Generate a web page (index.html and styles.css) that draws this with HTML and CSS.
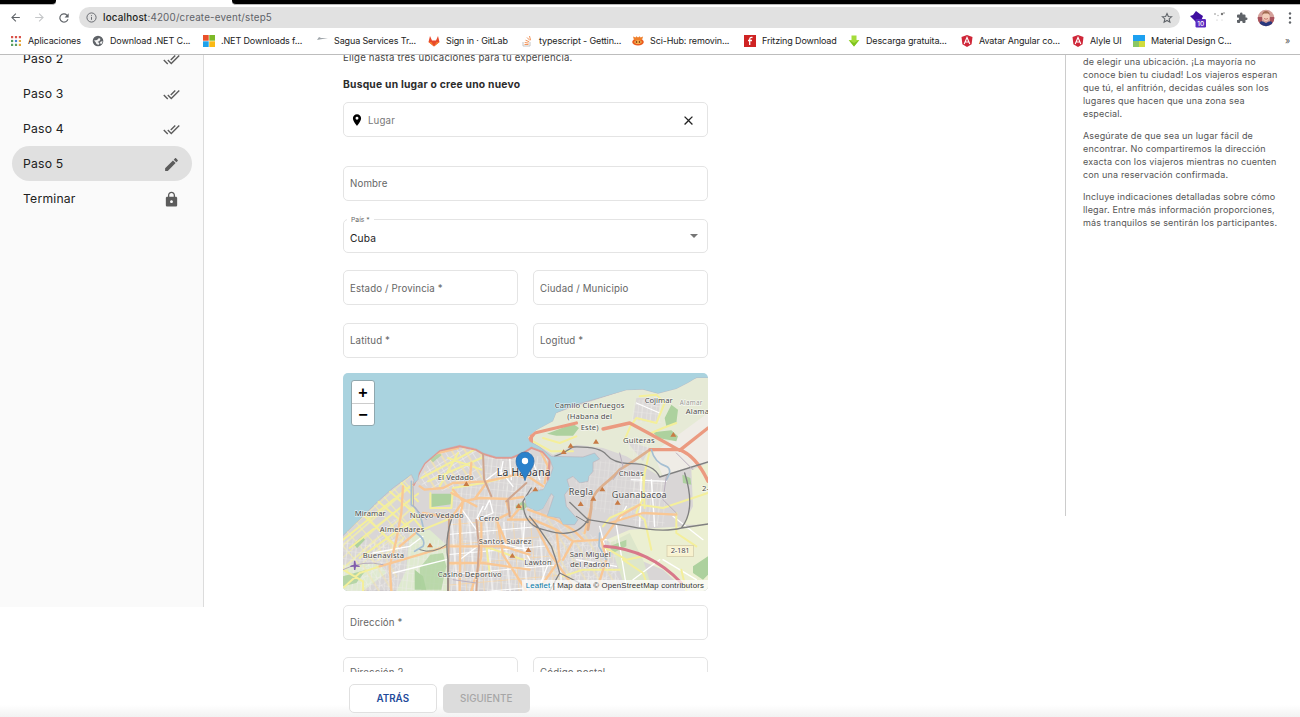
FILE: index.html
```html
<!DOCTYPE html>
<html lang="es">
<head>
<meta charset="utf-8">
<title>Crear evento</title>
<link rel="stylesheet" href="styles.css">
</head>
<body>
<header class="chrome">
  <div class="tabstrip"><div class="dark left"></div><div class="dark right"></div></div>
  <div class="toolbar">
    <svg class="nav-ic" viewBox="0 0 24 24"><path d="M20 11H7.800l5.600-5.600L12 4l-8 8 8 8 1.400-1.400L7.800 13H20z" fill="#5f6368"/></svg>
    <svg class="nav-ic" viewBox="0 0 24 24"><path d="M4 11h12.200l-5.600-5.600L12 4l8 8-8 8-1.400-1.400 5.600-5.600H4z" fill="#c4c6c8"/></svg>
    <svg class="nav-ic" viewBox="0 0 24 24"><path d="M17.650 6.350A8 8 0 1 0 19.730 14h-2.080A6 6 0 1 1 12 6c1.660 0 3.140.690 4.220 1.780L13 11h7V4z" fill="#5f6368"/></svg>
    <div class="omnibox">
      <svg class="info" viewBox="0 0 24 24" fill="none" stroke="#5f6368" stroke-width="2"><circle cx="12" cy="12" r="10"/><path d="M12 11v6M12 7v2"/></svg>
      <span class="url"><b>localhost</b>:4200/create-event/step5</span>
      <svg class="star" viewBox="0 0 24 24" fill="none" stroke="#5f6368" stroke-width="2.200"><path d="M12 3l2.700 6 6.500.600-4.900 4.300 1.500 6.400L12 17l-5.800 3.300 1.500-6.400-4.900-4.300 6.500-.600z"/></svg>
    </div>
    <div class="ext">
      <svg class="ext-a" viewBox="0 0 18 18"><path d="M1 6l3-1 3-4 4 3 3 2-2 5-5 1-3-3z" fill="#3f0fa0"/><rect x="6.500" y="9" width="10.500" height="8.500" rx="1.200" fill="#5b2bc0"/><text x="11.700" y="15.900" text-anchor="middle" class="badge">10</text></svg>
      <svg class="ext-b" viewBox="0 0 14 14" fill="#b9b9b9"><circle cx="2" cy="3" r="1"/><circle cx="5" cy="4.500" r=".8"/><circle cx="9" cy="3" r="1.200" fill="#777"/><circle cx="11" cy="2" r="1"/><circle cx="4" cy="9" r=".6"/><circle cx="9" cy="9" r=".5"/></svg>
      <svg class="ext-c" viewBox="0 0 24 24"><path d="M20.500 11H19V7a2 2 0 0 0-2-2h-4V3.500a2.500 2.500 0 0 0-5 0V5H4a2 2 0 0 0-2 2v3.800h1.500a2.700 2.700 0 0 1 0 5.400H2V20a2 2 0 0 0 2 2h3.800v-1.500a2.700 2.700 0 0 1 5.400 0V22H17a2 2 0 0 0 2-2v-4h1.500a2.500 2.500 0 0 0 0-5z" fill="#5f6368"/></svg>
      <svg class="avatar" viewBox="0 0 18 18"><defs><clipPath id="av"><circle cx="9" cy="9" r="8.300"/></clipPath></defs><g clip-path="url(#av)"><path d="M0 0h18v18H0z" fill="#d4a09a"/><path d="M0 8h5v10H0zM13 8h5v10h-5z" fill="#a8525c"/><path d="M2 18c0-8 4-6 7-4 3-2 7-4 7 4z" fill="#29387e"/><ellipse cx="9" cy="7.300" rx="3.600" ry="4.800" fill="#f2cdb9"/><path d="M5.200 6c0-5.500 7.600-5.500 7.600 0L11 4.500H7z" fill="#a06a50"/><path d="M7 9.500q2 1.500 4 0" stroke="#b7605a" fill="none" stroke-width=".8"/></g></svg>
      <svg class="dots" viewBox="0 0 4 14" fill="#5f6368"><circle cx="2" cy="2.500" r="1.200"/><circle cx="2" cy="7" r="1.200"/><circle cx="2" cy="11.500" r="1.200"/></svg>
    </div>
  </div>
  <nav class="bookmarks">
    <a><svg viewBox="0 0 12 12"><g fill="#d9534a"><path d="M1 1h2.200v2.200H1zM4.900 1h2.200v2.200H4.900zM8.800 1H11v2.200H8.800z"/></g><path d="M1 4.900h2.200v2.200H1z" fill="#4c9a5f"/><path d="M4.900 4.900h2.200v2.200H4.900z" fill="#4b83d8"/><path d="M8.800 4.900H11v2.200H8.800zM8.800 8.800H11V11H8.800z" fill="#e5a63b"/><path d="M1 8.800h2.200V11H1zM4.900 8.800h2.200V11H4.900z" fill="#5c9e61"/></svg><span>Aplicaciones</span></a>
    <a><svg viewBox="0 0 12 12"><circle cx="6" cy="6" r="5.300" fill="#5f6368"/><path d="M2 5.500l3-.5 2-2 1.500 1-1 2-2 1 2 1-1 2-2-1-1-2zM8 7l2.500-1-.5 2.500-1.500.5z" fill="#f4f4f4"/></svg><span>Download .NET C...</span></a>
    <a><svg viewBox="0 0 12 12"><path d="M0 0h5.700v5.700H0z" fill="#e9502a"/><path d="M6.300 0H12v5.700H6.300z" fill="#7db928"/><path d="M0 6.300h5.700V12H0z" fill="#20a2ea"/><path d="M6.300 6.300H12V12H6.300z" fill="#fab914"/></svg><span>.NET Downloads f...</span></a>
    <a><svg viewBox="0 0 12 12"><path d="M1 5l2-3 2 1 7 0-7 1.300z" fill="#9fa5aa"/></svg><span>Sagua Services Tr...</span></a>
    <a><svg viewBox="0 0 12 12"><path d="M6 11.500L.5 7 2 1l2 4.500h4L10 1l1.500 6z" fill="#e8492b"/><path d="M.5 7h3L6 11.500zM11.500 7h-3L6 11.500z" fill="#f47a2c"/></svg><span>Sign in · GitLab</span></a>
    <a><svg viewBox="0 0 12 12" fill="none"><path d="M2 7v4h7V7" stroke="#c4c4c4"/><path d="M3.500 9.500h4M3.700 7.500l4 .6M4.500 5.200l3.700 1.500M6 2.500l3 3M8.500 1l1 4" stroke="#f2945a"/></svg><span>typescript - Gettin...</span></a>
    <a><svg viewBox="0 0 12 12"><ellipse cx="6" cy="7" rx="5.800" ry="3.500" fill="#ea5a1c"/><path d="M1 1.500l2.500 1 .8-1.300L6 2.500l1.800-1.300.8 1.300 2.500-1L10 5H2z" fill="#ef7f2b"/><ellipse cx="6" cy="7" rx="3.600" ry="1.800" fill="#ffc95e"/><circle cx="4.500" cy="7" r="1" fill="#8f3b12"/><circle cx="7.500" cy="7" r="1" fill="#8f3b12"/></svg><span>Sci-Hub: removin...</span></a>
    <a><svg viewBox="0 0 12 12"><path d="M0 0h12v12H0z" fill="#cf2323"/><path d="M8.500 2.500C6 2 5.700 3 5.700 5v5M4 5.500h4" stroke="#fff" stroke-width="1.300" fill="none"/></svg><span>Fritzing Download</span></a>
    <a><svg viewBox="0 0 12 12"><path d="M3.500.5h5V5h2.800L6 11.500.7 5h2.800z" fill="#a4dc3a"/><path d="M.7 5L6 11.500 11.300 5 6 8z" fill="#7fc31f"/></svg><span>Descarga gratuita...</span></a>
    <a><svg viewBox="0 0 12 12"><path d="M6 0l5.500 2-.9 7.300L6 12 1.400 9.300.5 2z" fill="#cf2638"/><path d="M3.200 9L6 2.500 8.800 9M4.200 7h3.600" stroke="#fff" stroke-width="1.100" fill="none"/></svg><span>Avatar Angular co...</span></a>
    <a><svg viewBox="0 0 12 12"><path d="M6 0l5.500 2-.9 7.300L6 12 1.400 9.300.5 2z" fill="#cf2638"/><path d="M3.200 9L6 2.500 8.800 9M4.200 7h3.600" stroke="#fff" stroke-width="1.100" fill="none"/></svg><span>Alyle UI</span></a>
    <a><svg viewBox="0 0 12 12"><path d="M0 0h12v6H0z" fill="#1da0f0"/><path d="M0 6h12v6H0z" fill="#d0dc3c"/><path d="M0 6l6 0v6H0z" fill="#8bc763"/></svg><span>Material Design C...</span></a>
    <a class="more">»</a>
  </nav>
</header>

<main class="page">
  <aside class="steps">
    <div class="step"><span>Paso 2</span><svg viewBox="0 0 24 24"><path d="M18 7l-1.410-1.410-6.340 6.340 1.410 1.410L18 7zm4.240-1.410L11.660 16.170 7.480 12l-1.410 1.410L11.660 19l12-12-1.420-1.410zM.41 13.410L6 19l1.410-1.410L1.830 12 .41 13.410z"/></svg></div>
    <div class="step"><span>Paso 3</span><svg viewBox="0 0 24 24"><path d="M18 7l-1.410-1.410-6.340 6.340 1.410 1.410L18 7zm4.240-1.410L11.660 16.170 7.480 12l-1.410 1.410L11.660 19l12-12-1.420-1.410zM.41 13.410L6 19l1.410-1.410L1.830 12 .41 13.410z"/></svg></div>
    <div class="step"><span>Paso 4</span><svg viewBox="0 0 24 24"><path d="M18 7l-1.410-1.410-6.340 6.340 1.410 1.410L18 7zm4.240-1.410L11.660 16.170 7.480 12l-1.410 1.410L11.660 19l12-12-1.420-1.410zM.41 13.410L6 19l1.410-1.410L1.830 12 .41 13.410z"/></svg></div>
    <div class="step active"><span>Paso 5</span><svg viewBox="0 0 24 24"><path d="M3 17.250V21h3.750L17.810 9.940l-3.750-3.750L3 17.250zM20.710 7.040c.39-.39.39-1.020 0-1.410l-2.340-2.340c-.39-.39-1.020-.39-1.410 0l-1.830 1.830 3.750 3.750 1.830-1.830z"/></svg></div>
    <div class="step"><span>Terminar</span><svg viewBox="0 0 24 24"><path d="M18 8h-1V6c0-2.760-2.240-5-5-5S7 3.240 7 6v2H6c-1.100 0-2 .9-2 2v10c0 1.100.9 2 2 2h12c1.100 0 2-.9 2-2V10c0-1.100-.9-2-2-2zm-6 9c-1.100 0-2-.9-2-2s.9-2 2-2 2 .9 2 2-.9 2-2 2zm3.100-9H8.900V6c0-1.710 1.390-3.100 3.100-3.100s3.100 1.390 3.100 3.100v2z"/></svg></div>
  </aside>

  <section class="center">
    <div class="form">
      <p class="intro">Elige hasta tres ubicaciones para tu experiencia.</p>
      <h2 class="heading">Busque un lugar o cree uno nuevo</h2>
      <div class="field search">
        <svg class="pin" viewBox="0 0 24 24"><path d="M12 2C8.130 2 5 5.130 5 9c0 5.250 7 13 7 13s7-7.750 7-13c0-3.870-3.130-7-7-7zm0 9.500a2.500 2.500 0 0 1 0-5 2.500 2.500 0 0 1 0 5z"/></svg>
        <span class="ph">Lugar</span>
        <svg class="close" viewBox="0 0 24 24"><path d="M19 6.410L17.590 5 12 10.590 6.410 5 5 6.410 10.590 12 5 17.590 6.410 19 12 13.410 17.590 19 19 17.590 13.410 12z"/></svg>
      </div>
      <div class="field name"><span>Nombre</span></div>
      <div class="field select"><label class="floating">País *</label><span class="value">Cuba</span><i class="caret"></i></div>
      <div class="row"><div class="field"><span>Estado / Provincia *</span></div><div class="field"><span>Ciudad / Municipio</span></div></div>
      <div class="row"><div class="field"><span>Latitud *</span></div><div class="field"><span>Logitud *</span></div></div>

      <div class="map">
        <svg class="tiles" viewBox="9 9 1095 654" preserveAspectRatio="none">
          <defs>
            <path id="land" d="M0 488L60 430 105 385 150 345 205 305 213 322 210 335 225 320 228 300 245 270 290 232 350 217 400 228 420 240 460 252 505 252 540 238 565 222 600 235 620 258 630 285 617 320 600 350 575 352 545 372 550 400 580 415 600 408 625 362 632 370 612 430 650 435 660 455 695 455 705 440 670 400 665 365 680 345 672 320 690 310 710 330 735 325 738 310 750 295 750 268 770 258 755 240 720 252 625 250 590 222 560 205 555 192 580 172 630 145 640 120 700 95 780 72 850 52 900 50 945 62 1000 48 1035 30 1060 15 1095 15V654H0z"/>
            <clipPath id="landclip"><use href="#land"/></clipPath>
            <pattern id="gridA" width="38" height="52" patternUnits="userSpaceOnUse" patternTransform="rotate(-41)"><path d="M0 0H38M0 26H38M0 0V52" stroke="#f4f0a6" stroke-width="5" fill="none"/></pattern>
            <pattern id="gridB" width="24" height="34" patternUnits="userSpaceOnUse" patternTransform="rotate(58)"><path d="M0 0H24M0 0V34" stroke="#f6f4f2" stroke-width="3" fill="none"/><path d="M0 17H24" stroke="#f7e6a8" stroke-width="4"/></pattern>
            <pattern id="gridC" width="27" height="23" patternUnits="userSpaceOnUse" patternTransform="rotate(6)"><path d="M0 0H27M0 0V23M13 0V23" stroke="#ebe8e6" stroke-width="2.500" fill="none"/></pattern>
            <pattern id="gridD" width="52" height="60" patternUnits="userSpaceOnUse" patternTransform="rotate(-5)"><path d="M0 0H52M0 0V60" stroke="#f7d5a6" stroke-width="4" fill="none"/><path d="M26 0V60M0 30H52" stroke="#fff" stroke-width="3" fill="none"/></pattern>
          </defs>
          <path d="M0 0H1110V670H0z" fill="#aad3df"/>
          <g transform="translate(9 9)" stroke-linejoin="round" stroke-linecap="round">
            <use href="#land" fill="#d9d6d6" stroke="#b9b3bd" stroke-width="2"/>
            <g clip-path="url(#landclip)">
              <path d="M550 195L640 120 850 50 1095 10V270L950 310 900 280 850 250 780 225 700 215 630 245z" fill="#e6ead6"/>
              <path d="M860 470L1095 455V654H1030L960 590 840 540 790 500zM1045 290L1095 270V455H1020L1050 400z" fill="#ebefd2"/>
              <path d="M1000 190L1095 120V270L960 310 930 240z" fill="#efece6"/>
              <path d="M880 75H955L940 150 870 140zM850 205L920 225 900 265z" fill="#dcd9d8"/>
              <path d="M200 480L260 470 315 520 312 654H160L190 590zM0 575L110 570 130 600 60 654H0z" fill="#dfead0"/>
              <path d="M800 510L860 480 900 560 930 654H850z" fill="#dde6cb"/>
              <path d="M0 470L205 305 215 430 160 545 0 600z" fill="url(#gridA)"/>
              <path d="M225 330L270 245 350 217 420 240 418 320 290 355z" fill="url(#gridB)"/>
              <path d="M418 250L620 250V340L540 370 420 325z" fill="url(#gridC)"/>
              <path d="M0 500H820V654H0zM330 340H540L620 460 330 500z" fill="url(#gridC)"/>
              <path d="M318 440L560 450 700 654H318z" fill="url(#gridD)"/>
              <path d="M60 530L170 420 200 480 150 654H60zM590 420L700 470 790 500 840 654H640z" fill="url(#gridB)" opacity=".6"/>
              <path d="M870 320H965V460H870zM875 80H955V150H865zM840 200L930 220 880 265z" fill="url(#gridC)"/>
              <path d="M680 280L800 260 900 300 860 440 720 400z" fill="url(#gridC)" opacity=".6"/>
              <g fill="#add19e">
                <path d="M265 362H325V394L265 402zM215 590L240 610 250 650H215z"/>
                <path d="M230 585L262 545 300 540 310 580 295 650H235z" opacity=".75"/>
                <path d="M32 512L58 490 66 500 42 526zM612 182L690 152 708 165 690 188 640 188z"/>
                <path d="M965 135L985 95 1005 110 1000 150 970 160zM930 178L985 172 1005 190 1000 205 945 195zM1050 580L1095 550V605L1080 620 1050 600z"/>
                <path d="M1018 305L1042 315 1045 335 1020 330zM518 398L540 385 555 398 540 412 520 408z"/>
                <path d="M260 258L290 240 296 246 270 268zM0 610L70 590 40 630 0 640zM800 520L850 500 850 520 810 540z" opacity=".85"/>
              </g>
              <path d="M590 402L622 365 615 420 595 425z" fill="#d3cfcf"/>
              <g fill="none" stroke="#fff" stroke-width="4">
                <path d="M425 325L470 290 510 340M425 410L440 380 450 420 400 440 420 400M545 440L540 520 560 560M830 440L850 400M865 320L970 325M865 360H965M895 300L890 460M925 320L935 460M820 455L850 640M770 460L790 540M700 505L790 500M990 430L1080 500M880 90L950 120M480 265L470 320M500 255L505 320M560 240L590 320M350 560L430 500 550 530M90 540L200 520 240 490M150 600L310 560M700 560L820 580M960 560L1060 620M870 620L950 560M350 400L400 470M620 560L590 640"/>
              </g>
              <g fill="none" stroke="#f4ef9b" stroke-width="6">
                <path d="M0 500L205 337M20 525L225 362M50 555L230 425M60 425L160 520M105 385L205 470M140 355L235 440M175 330L225 385M235 315L395 230M255 325L415 255M315 255L415 290M345 240L290 340M262 360V405H325L330 345"/>
                <path d="M921 230L905 300 900 375 880 420 905 440 925 530M862 160L880 135 940 150 965 90 940 65 890 70M860 165L845 200M925 180L960 165 1000 150M780 460L800 435 890 395 960 405 1095 360M905 405L900 300M570 205L625 235 690 235M600 195L650 210 700 190"/>
                <path d="M0 645L50 600 110 580M205 330L215 440 240 470 325 435M330 345L420 330 520 305M410 515L540 560M430 520L440 600M1015 590L1030 654M1000 420V480L1060 520M840 560L900 600 920 654M780 520L850 560 900 550M660 610L720 590 830 590M0 590L60 625 60 654"/>
              </g>
              <g fill="none" stroke="#f9c794" stroke-width="7">
                <path d="M230 340L245 350 300 345 330 330 430 325 520 305 545 315M330 350L360 385 410 375 500 378 540 372M360 385L325 435 240 420M180 340L175 420 160 500 140 580 145 654M230 470L170 520M360 385L350 440 352 500 350 654M395 378L430 330M325 360L400 400M540 300L600 340"/>
                <path d="M495 440H570L640 470 690 505 780 500 830 430 890 395M318 520H480L560 545M320 570H420L560 590M415 450V550L385 654M465 455L480 545 550 654M555 410L640 440 690 470 720 500M535 400L500 440M570 440L620 540 700 654M640 470L650 560 590 645M725 480L745 400M690 505L660 560M110 580L230 545 310 520M490 385L500 420 460 440 490 510M385 270L380 330M285 240L345 225M590 230L615 280 605 330M775 500L790 560 760 654M800 450L900 420 1000 425"/>
              </g>
              <path d="M745 405C740 350 800 330 830 290L870 265 921 230M745 405L735 470" fill="none" stroke="#ddb08e" stroke-width="8"/>
              <path d="M212 335L218 322 228 300 245 270 290 232 350 219 400 230 420 242 460 254 505 254 540 240 565 224 600 237 620 260 615 320" fill="none" stroke="#dd9a92" stroke-width="7"/>
              <path d="M420 240L423 318 445 370M490 385L500 375 550 330M495 380L500 430M400 440L408 520 400 654M318 440L315 654" fill="none" stroke="#cea58e" stroke-width="6"/>
              <path d="M555 205L575 180 700 150M780 168L860 150 920 182 1010 232 1095 165M1015 230L921 230M1010 230Q1060 250 1095 325M565 185V220" fill="none" stroke="#eb9a80" stroke-width="10"/>
              <path d="M785 520Q920 530 1015 630" fill="none" stroke="#d8788a" stroke-width="9"/>
              <g fill="none" stroke="#808080" stroke-width="4">
                <path d="M635 250L660 240 690 222Q770 220 790 245T860 272Q930 270 950 312L1095 267M680 388L735 440 860 460Q960 480 1015 465Q1060 410 1025 300M1015 465L1095 453M565 345L540 385Q540 460 610 472Q700 500 735 440M580 455L625 520Q640 560 650 600L710 630M325 440Q305 500 315 560V654M650 600L620 654M560 430L580 455"/>
                <path d="M700 430L735 450 735 435M230 530Q270 545 310 515" stroke-width="3"/>
              </g>
              <path d="M925 230Q935 270 970 280Q990 290 970 320M770 480L768 520 790 560M205 325V395Q230 410 240 460M220 480Q250 500 240 520L215 535" fill="none" stroke="#a5bfd3" stroke-width="5"/>
              <path d="M0 590Q60 560 120 575M210 340L212 400 250 440M830 240L840 280 810 320M970 310L960 380 1000 420M330 620L400 630M1000 240L1050 290" fill="none" stroke="#b9aebd" stroke-width="3"/>
            </g>
          </g>
          <g fill="#c87b45"><path d="M379 334l9 14h-18zM270 518l9 14h-18zM517 549l9 14h-18zM662 252l9-14 9 14zM692 219l9 14h-18zM768 207l9 14h-18zM787 350l9 14h-18zM760 378l9 14h-18zM722 394l9 14h-18zM833 390l9 14h-18zM1000 186l9 14h-18zM565 532l9 14h-18zM586 350l9 14h-18zM536 400l9 14h-18z"/></g>
          <path d="M31 587l10-3 1-12h4l2 12 11 3v4l-11-1-2 10h-4l-1-10-10 1z" fill="#815dac"/>
          <rect x="981" y="526" width="79" height="34" fill="#f8f2ce" stroke="#cec7a6" stroke-width="2"/>
          <g class="place">
            <text x="293" y="329" textLength="108">El Vedado</text>
            <text x="44" y="437" textLength="93">Miramar</text>
            <text x="209" y="444" textLength="162">Nuevo Vedado</text>
            <text x="119" y="485" textLength="134">Almendares</text>
            <text x="417" y="452" textLength="61">Cerro</text>
            <text x="416" y="521" textLength="158">Santos Suárez</text>
            <text x="68" y="564" textLength="124">Buenavista</text>
            <text x="293" y="621" textLength="192">Casino Deportivo</text>
            <text x="553" y="586" textLength="82">Lawton</text>
            <text x="644" y="115" textLength="209">Camilo Cienfuegos</text>
            <text x="682" y="148" textLength="134">(Habana del</text>
            <text x="722" y="179" textLength="54">Este)</text>
            <text x="914" y="100" textLength="84">Cojimar</text>
            <text x="1019" y="105" textLength="68" class="faint">Alamar</text>
            <text x="1037" y="133" textLength="70">Alama</text>
            <text x="849" y="219" textLength="95">Guiteras</text>
            <text x="836" y="318" textLength="75">Chibás</text>
            <text x="689" y="560" textLength="123">San Miguel</text>
            <text x="690" y="592" textLength="120">del Padrón</text>
            <text x="992" y="550" textLength="57">2-181</text>
            <text x="1086" y="364">2-</text>
          </g>
          <g class="place town">
            <text x="686" y="375" textLength="73">Regla</text>
            <text x="815" y="384" textLength="165">Guanabacoa</text>
          </g>
          <text x="470" y="318" textLength="162" class="place city">La Habana</text>
          <path d="M555 332C548 305 528 297 528 273A27 27 0 0 1 582 273C582 297 562 305 555 332z" fill="#2a81cb" stroke="#2567a5" stroke-width="2"/>
          <circle cx="555" cy="273" r="9.500" fill="#fff"/>
        </svg>
        <div class="zoomctl"><span>+</span><span>−</span></div>
        <div class="credit"><a>Leaflet</a> | Map data © OpenStreetMap contributors</div>
      </div>

      <div class="field address"><span>Dirección *</span></div>
      <div class="row last"><div class="field"><span>Dirección 2</span></div><div class="field"><span>Código postal</span></div></div>
    </div>
    <div class="actions"><button class="btn back">ATRÁS</button><button class="btn next" disabled>SIGUIENTE</button></div>
  </section>

  <aside class="tips">
    <p>de elegir una ubicación. ¡La mayoría no<br>conoce bien tu ciudad! Los viajeros esperan<br>que tú, el anfitrión, decidas cuáles son los<br>lugares que hacen que una zona sea<br>especial.</p>
    <p>Asegúrate de que sea un lugar fácil de<br>encontrar. No compartiremos la dirección<br>exacta con los viajeros mientras no cuenten<br>con una reservación confirmada.</p>
    <p>Incluye indicaciones detalladas sobre cómo<br>llegar. Entre más información proporciones,<br>más tranquilos se sentirán los participantes.</p>
  </aside>
</main>
</body>
</html>
```
FILE: styles.css
```css
* { box-sizing: border-box; }
body {
  margin: 0;
  width: 1300px;
  height: 717px;
  overflow: hidden;
  display: flex;
  flex-direction: column;
  background: #fff;
  color: #333;
  font-family: Inter, "Open Sans", sans-serif;
}
p, h2 { margin: 0; }
svg { display: block; flex: none; }

/* Browser chrome */
.chrome { height: 55px; flex: none; border-bottom: 1px solid #bdbdbd; background: #fff; }
.tabstrip { height: 5px; display: flex; justify-content: space-between; }
.dark { height: 5px; background: #000; border-bottom: 1px solid #bbb; }
.left { width: 56px; border-bottom-right-radius: 4px; }
.right { width: 1068px; border-bottom-left-radius: 4px; }
.toolbar { height: 24px; display: flex; align-items: center; padding: 1px 7px 0 9px; }
.nav-ic { width: 13px; height: 13px; margin-right: 11px; }
.nav-ic:nth-child(3) { width: 14px; height: 14px; margin-right: 8px; }
.omnibox { width: 1101px; height: 21px; border-radius: 11px; background: #e1e1e1; display: flex; align-items: center; padding: 0 7px; }
.info { width: 11px; height: 11px; margin-right: 6px; }
.url { flex: 1; font-size: 9.800px; letter-spacing: .2px; color: #5f6368; }
.url b { font-weight: 500; color: #1d1e20; }
.star { width: 12px; height: 12px; }
.ext { flex: 1; display: flex; align-items: center; padding-left: 9px; }
.ext-a { width: 18px; height: 18px; margin-right: 6px; margin-top: 3px; }
.badge { font-size: 6.500px; font-weight: 500; fill: #fff; }
.ext-b { width: 14px; height: 14px; margin-right: 9px; }
.ext-c { width: 12px; height: 12px; margin-right: 9px; }
.avatar { width: 18px; height: 18px; margin-right: 13px; }
.dots { width: 4px; height: 14px; }
.bookmarks {
  height: 23px;
  display: grid;
  grid-template-columns: 82px 111px 113px 112px 93px 111px 112px 104px 113px 111px 61px 152px 10px;
  align-items: center;
  padding-left: 10px;
  font-size: 9px;
  letter-spacing: -.13px;
  color: #222;
}
.bookmarks a { display: flex; align-items: center; gap: 6px; white-space: nowrap; }
.bookmarks svg { width: 12px; height: 12px; }
.bookmarks .more { color: #555; }

/* Page columns */
.page { flex: 1; display: flex; align-items: flex-start; overflow: hidden; background: linear-gradient(#fff 0 650px, #f2f2f2 662px); }
.steps { width: 204px; height: 552px; background: #fafafa; border-right: 1px solid #dcdcdc; padding: 0 11px 0 12px; overflow: hidden; }
.step { height: 35px; display: flex; align-items: center; justify-content: space-between; padding: 0 12px 0 11px; border-radius: 18px; font-size: 12.200px; letter-spacing: .2px; color: #212121; }
.step:first-child { margin-top: -14px; }
.step svg { width: 17px; height: 17px; margin-top: 1px; fill: #5c5c5c; }
.step.active { background: #e0e0e0; }

.center { width: 861px; height: 662px; display: flex; flex-direction: column; padding-left: 139px; }
.form { width: 365px; height: 617px; overflow: hidden; }
.intro { height: 17px; margin-top: -5px; line-height: 15px; font-size: 9.600px; letter-spacing: .21px; color: #444; white-space: nowrap; }
.heading { height: 31px; margin-top: 4px; line-height: 26px; font-size: 10.300px; letter-spacing: .22px; font-weight: 700; color: #2b2b2b; white-space: nowrap; }
.field { height: 35px; display: flex; align-items: center; padding: 0 6px; border: 1px solid #e4e4e4; border-radius: 5px; background: #fff; font-size: 9.700px; letter-spacing: .14px; color: #666; white-space: nowrap; }
.search { margin-bottom: 29px; padding-top: 1px; }
.pin { width: 14px; height: 14px; margin-right: 4px; fill: #000; }
.ph { flex: 1; color: #777; }
.close { width: 15px; height: 15px; margin-right: 5px; margin-top: 1px; fill: #222; }
.name { margin-bottom: 18px; }
.select { position: relative; height: 34px; margin-bottom: 17px; justify-content: space-between; }
.floating { position: absolute; left: 3px; top: -5px; padding: 0 4px; background: #fff; font-size: 6.800px; line-height: 10px; letter-spacing: 0; color: #666; }
.value { padding-top: 4px; font-size: 10.200px; color: #222; }
.caret { width: 0; height: 0; margin-right: 3px; border: 4px solid transparent; border-top-color: #757575; border-bottom: 0; }
.row { display: grid; grid-template-columns: 175px 175px; gap: 15px; margin-bottom: 17.500px; }
.row .field { padding-top: 1px; }

/* Map */
.map { position: relative; height: 218px; margin-top: -2px; margin-bottom: 14px; border-radius: 5px; overflow: hidden; }
.tiles { width: 365px; height: 218px; }
.place { font-family: "Noto Sans", sans-serif; font-size: 23px; fill: #4d4d4d; stroke: rgba(255,255,255,.6); stroke-width: 4px; paint-order: stroke; }
.town { font-size: 27px; }
.city { font-size: 31px; fill: #333; }
.faint { fill: #999; font-size: 19px; }
.zoomctl { position: absolute; left: 8px; top: 7px; width: 24px; border: 1px solid #8fa7ae; border-radius: 3px; background: #fff; overflow: hidden; }
.zoomctl span { display: block; height: 22px; text-align: center; font: 700 16px/24px "Liberation Sans", sans-serif; color: #000; }
.zoomctl span + span { border-top: 1px solid #ccc; line-height: 22px; }
.credit { position: absolute; right: 0; bottom: 0; height: 11px; padding: 0 4px; background: rgba(255,255,255,.7); font: 7.800px/11px "Liberation Sans", sans-serif; letter-spacing: .17px; color: #333; white-space: nowrap; }
.credit a { color: #0078a8; }
.address { margin-bottom: 17px; }
.last .field { padding: 0 6px 4px; }

.actions { width: 861px; height: 45px; display: flex; gap: 6px; margin-left: -139px; padding: 12px 0 0 145px; }
.btn { width: 87.500px; height: 29px; padding: 0; border-radius: 5px; font-family: Inter, sans-serif; font-size: 9.800px; font-weight: 600; }
.back { border: 1px solid #e0e0e0; background: #fff; color: #1f4b9b; }
.next { border: 0; background: #dcdcdc; color: #a6a6a6; font-weight: 500; letter-spacing: .05px; }

/* Tips */
.tips { flex: 1; height: 461px; border-left: 1px solid #ccc; padding-left: 17px; font-size: 9px; letter-spacing: .16px; line-height: 13.100px; color: #555; white-space: nowrap; }
.tips p { margin: -.5px 0 9.200px; }
```
